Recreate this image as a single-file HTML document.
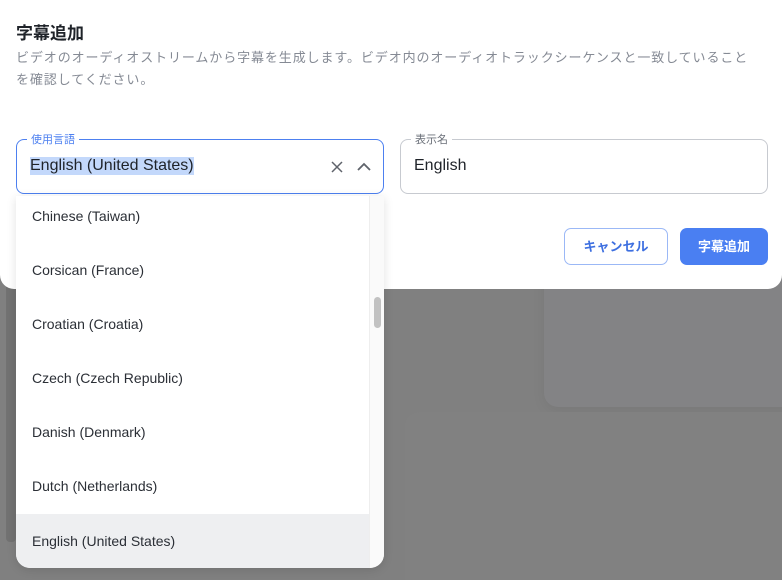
<!DOCTYPE html>
<html><head><meta charset="utf-8"><style>
*{margin:0;padding:0;box-sizing:border-box}
html,body{width:782px;height:580px;overflow:hidden}
body{background:#808080;font-family:"Liberation Sans","Noto Sans CJK JP",sans-serif;position:relative}
.bgcard{position:absolute;left:544px;top:260px;width:260px;height:147px;border-radius:14px;background:#838385;box-shadow:0 4px 14px rgba(0,0,0,.06)}
.bgcard2{position:absolute;left:405px;top:412px;width:377px;height:168px;border-radius:14px 0 0 0;background:#818181}
.leftbar{position:absolute;left:6px;top:280px;width:10px;height:262px;background:#727272;border-radius:4px}
.dlg{position:absolute;left:0;top:0;width:782px;height:289px;background:#fff;border-radius:0 0 14px 14px}
h1{position:absolute;left:16px;top:19px;font-size:17px;font-weight:bold;color:#1f2329}
.desc{position:absolute;left:16px;top:47px;width:742px;font-size:13px;letter-spacing:.9px;line-height:22px;color:#858a94}
.field{position:absolute;top:139px;height:55px;border:1px solid #c7cad0;border-radius:8px}
.field .lb{position:absolute;top:-9px;left:10px;padding:0 4px;background:#fff;font-size:11px;color:#6b7079}
.field .v{position:absolute;left:13px;top:17px;font-size:16px;color:#1f2329}
.f1{left:16px;width:368px;border-color:#4d80f0}
.f1 .lb{color:#4d80f0}
.f1 .v{background:#c3d8fb}
.f2{left:400px;width:368px}
.btn{position:absolute;top:228px;height:37px;border-radius:7px;font-size:13px;font-weight:bold;text-align:center;line-height:35px}
.c{left:564px;width:104px;border:1px solid #9bb8f6;color:#3d6fe0;background:#fff}
.a{left:680px;width:88px;background:#4a7ff2;color:#fff;line-height:37px}
.dd{position:absolute;left:16px;top:196px;width:368px;height:372px;background:#fff;border-radius:0 0 14px 14px;overflow:hidden;box-shadow:0 2px 10px rgba(0,0,0,.12)}
.it{position:absolute;left:0;width:353px;height:54px;font-size:14px;color:#2b2f36;padding-left:16px;line-height:54px}
.sb{position:absolute;left:353px;top:0;width:15px;height:372px;background:#fafafa;border-left:1px solid #eee}
.th{position:absolute;left:4px;top:101px;width:7px;height:31px;border-radius:4px;background:#c2c2c2}
</style></head><body>
<div class="bgcard"></div><div class="bgcard2"></div><div class="leftbar"></div>
<div class="dlg">
<h1>字幕追加</h1>
<div class="desc">ビデオのオーディオストリームから字幕を生成します。ビデオ内のオーディオトラックシーケンスと一致していることを確認してください。</div>
<div class="field f1"><span class="lb">使用言語</span><span class="v">English (United States)</span>
<svg style="position:absolute;left:314px;top:21px" width="12" height="12" viewBox="0 0 12 12"><path d="M1 1L11 11M11 1L1 11" stroke="#5f636b" stroke-width="1.5"/></svg>
<svg style="position:absolute;left:339px;top:22px" width="16" height="10" viewBox="0 0 16 10"><path d="M2 8L8 2L14 8" stroke="#5f636b" stroke-width="1.8" fill="none"/></svg>
</div>
<div class="field f2"><span class="lb">表示名</span><span class="v">English</span></div>
<div class="btn c">キャンセル</div><div class="btn a">字幕追加</div>
</div>
<div class="dd">
<div class="it" style="top:-7px">Chinese (Taiwan)</div>
<div class="it" style="top:47px">Corsican (France)</div>
<div class="it" style="top:101px">Croatian (Croatia)</div>
<div class="it" style="top:155px">Czech (Czech Republic)</div>
<div class="it" style="top:209px">Danish (Denmark)</div>
<div class="it" style="top:263px">Dutch (Netherlands)</div>
<div class="it" style="top:318px;background:#eeeff1">English (United States)</div>
<div class="sb"><div class="th"></div></div>
</div>
</body></html>
